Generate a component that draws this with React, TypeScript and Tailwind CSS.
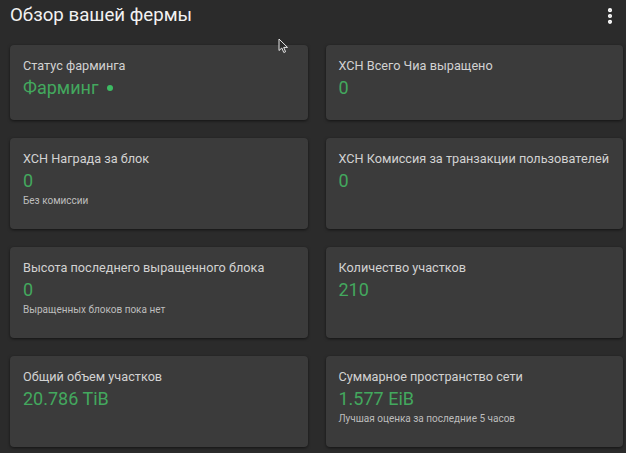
import { MoreVertical } from "lucide-react"

type Stat = {
  label: string
  value: string
  sub?: string
  dot?: boolean
}

// Rows of the farm overview, left then right
const STATS: Stat[] = [
  { label: "Статус фарминга", value: "Фарминг", dot: true },
  { label: "XCH Всего Чиа выращено", value: "0" },
  { label: "XCH Награда за блок", value: "0", sub: "Без комиссии" },
  { label: "XCH Комиссия за транзакции пользователей", value: "0" },
  {
    label: "Высота последнего выращенного блока",
    value: "0",
    sub: "Выращенных блоков пока нет",
  },
  { label: "Количество участков", value: "210" },
  { label: "Общий объем участков", value: "20.786 TiB" },
  {
    label: "Суммарное пространство сети",
    value: "1.577 EiB",
    sub: "Лучшая оценка за последние 5 часов",
  },
]

function StatCard({ label, value, sub, dot }: Stat) {
  return (
    <div className="rounded-[4px] bg-[#3b3b3b] px-[13px] pt-[11px] pb-[20px] shadow-[0_1px_3px_rgba(0,0,0,0.55)]">
      <div className="text-[12.7px] leading-[20px] text-[#d2d2d2] whitespace-nowrap">
        {label}
      </div>
      <div className="flex items-center gap-[9px] text-[18px] leading-[24px] text-[#43a85e]">
        <span>{value}</span>
        {dot && <span className="h-[6px] w-[6px] rounded-full bg-[#3dbb63]" />}
      </div>
      {sub && (
        <div className="text-[10px] leading-[16px] text-[#bdbdbd]">{sub}</div>
      )}
    </div>
  )
}

export default function App() {
  return (
    <div className="relative h-[453px] w-[626px] overflow-hidden bg-[#2b2b2b] font-['Roboto',sans-serif]">
      <div className="flex h-[31px] items-center justify-between pl-[10px] pr-[6px]">
        <h1 className="text-[18.7px] leading-none text-[#f2f2f2]">Обзор вашей фермы</h1>
        <MoreVertical size={20} strokeWidth={3} className="text-white" />
      </div>
      <div className="mt-[14px] grid grid-cols-2 items-stretch gap-x-[18px] gap-y-[18px] pl-[10px] pr-[3px]">
        {STATS.map((s) => (
          <StatCard key={s.label} {...s} />
        ))}
      </div>
      {/* mouse pointer caught in the screenshot */}
      <svg
        className="absolute left-[278px] top-[38px]"
        width="12"
        height="16"
        viewBox="0 0 12 16"
      >
        <path
          d="M1 1 L1 12.5 L3.8 10 L5.8 14.5 L7.6 13.7 L5.7 9.4 L9.5 9.4 Z"
          fill="#2b2b2b"
          stroke="#e6e6e6"
          strokeWidth="1"
        />
      </svg>
    </div>
  )
}
